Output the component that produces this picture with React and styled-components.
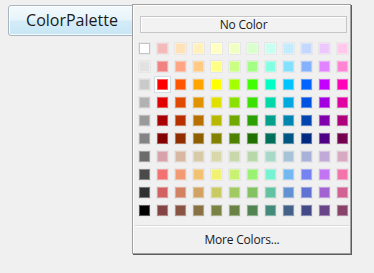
import React from "react";
import styled, { createGlobalStyle } from "styled-components";

const GlobalStyle = createGlobalStyle`
  html, body { margin: 0; padding: 0; background: #f0f0f0; }
  body { font-family: "Open Sans", "Noto Sans", "DejaVu Sans", sans-serif; color: #1e1e1e; }
`;

const PALETTE = [
  ["#ffffff", "#f4baba", "#ffe2b8", "#fff0bc", "#ffffc4", "#f0ffc4", "#d8ffcc", "#c8fff0", "#c4ecff", "#c4d8ff", "#ecc8ff", "#ffc8ec"],
  ["#e2e2e2", "#f08282", "#ffa484", "#ffca84", "#ffff84", "#caff84", "#a2ff84", "#84ffe2", "#84e0ff", "#84b2ff", "#e284ff", "#ff84d4"],
  ["#cacaca", "#ff0000", "#ff5400", "#ffa400", "#ffff00", "#a4ff00", "#40ff00", "#00ffc4", "#00c4ff", "#0064ff", "#c400ff", "#ff00b8"],
  ["#b2b2b2", "#e00000", "#e04a00", "#e09200", "#e0e000", "#8ae000", "#3ce000", "#00d8aa", "#00a8e0", "#0052e0", "#a200e0", "#e000a2"],
  ["#9a9a9a", "#a80000", "#b83000", "#b87000", "#b8b800", "#70aa00", "#2ca000", "#00a08a", "#0084b0", "#0044b0", "#8000ae", "#ae007a"],
  ["#848484", "#820000", "#902e00", "#8e5e00", "#828200", "#4e8000", "#207000", "#00705a", "#005682", "#002a82", "#500082", "#72004e"],
  ["#6c6c6c", "#d8a2aa", "#d8b8a2", "#d8caa8", "#d8d8aa", "#c8d8aa", "#b8d8aa", "#a8d8c8", "#a8c2d8", "#a8b2d8", "#c2aad8", "#d8aac2"],
  ["#4a4a4a", "#f27272", "#f29a72", "#f2c272", "#f2f272", "#caf272", "#9af272", "#74f2d2", "#74b8f2", "#7482f2", "#c274f2", "#f274aa"],
  ["#303030", "#d26262", "#d28262", "#d2a262", "#caca62", "#a2ca62", "#82c262", "#62c2a2", "#6292d2", "#6272d2", "#a262d2", "#d26292"],
  ["#000000", "#844444", "#8a5444", "#887244", "#7a8244", "#6a8244", "#528452", "#448a7a", "#446288", "#444a88", "#6a4488", "#884468"],
];

const Page = styled.div`
  position: relative;
  width: 374px;
  height: 273px;
  padding: 5px 0 0 8px;
  box-sizing: border-box;
`;

const TriggerButton = styled.button`
  width: 128px;
  height: 31px;
  box-sizing: border-box;
  border: 1px solid #a9b6c0;
  border-radius: 3px;
  background: linear-gradient(to bottom, #f4fafd 0%, #e6f4fb 48%, #d4ecf8 52%, #c8e6f6 100%);
  box-shadow: inset 0 0 0 1px rgba(255, 255, 255, 0.8);
  font-family: "Open Sans", "Noto Sans", sans-serif;
  font-size: 16px;
  color: #1a1a1a;
  padding: 0 0 1px 0;
  text-align: center;
`;

const Popup = styled.div`
  position: absolute;
  left: 132px;
  top: 4px;
  width: 219px;
  height: 250px;
  box-sizing: border-box;
  background: #f0f0f0;
  border: 1px solid #a0a0a0;
  box-shadow: inset 1px 1px 0 #ffffff, 1px 1px 0 #5c5c5c;
  display: flex;
  flex-direction: column;
  padding: 11px 3px 0 0;
`;

const NoColorButton = styled.div`
  margin-left: 7px;
  height: 17px;
  box-sizing: border-box;
  border: 1px solid #c6c6c6;
  background: #f2f2f2;
  box-shadow: inset 1px 1px 0 #ffffff;
  display: flex;
  align-items: center;
  justify-content: center;
  font-size: 12px;
  line-height: 14px;
  color: #1a1a1a;
  letter-spacing: -0.2px;
`;

const Grid = styled.div`
  margin: 10px 0 0 6px;
  display: grid;
  grid-template-columns: repeat(12, 11px);
  grid-auto-rows: 11px;
  column-gap: 7px;
  row-gap: 7px;
`;

const Swatch = styled.div`
  width: 11px;
  height: 11px;
  box-sizing: border-box;
  background: ${(p) => p.$color};
  border: 1px solid ${(p) => (p.$light ? "#c4c4c4" : "rgba(255,255,255,0.35)")};
  box-shadow: ${(p) =>
    p.$selected ? "0 0 0 2px #ffffff, 0 0 0 3px #d3dde6" : "0 0 0 1px rgba(225,225,225,0.6)"};
`;

const Separator = styled.div`
  margin: 9px -2px 0 2px;
  height: 0;
  border-top: 1px solid #d9d9d9;
  border-bottom: 1px solid #ffffff;
`;

const MoreColors = styled.div`
  flex: 1;
  display: flex;
  align-items: center;
  justify-content: center;
  font-size: 12px;
  color: #1a1a1a;
  padding: 0 0 2px 4px;
  letter-spacing: -0.2px;
`;

export default function App() {
  return (
    <>
      <GlobalStyle />
      <Page>
        <TriggerButton>ColorPalette</TriggerButton>
        <Popup>
          <NoColorButton>No Color</NoColorButton>
          <Grid>
            {PALETTE.map((row, r) =>
              row.map((c, i) => (
                <Swatch
                  key={`${r}-${i}`}
                  $color={c}
                  $light={r === 0 && i === 0}
                  $selected={r === 2 && i === 1}
                />
              ))
            )}
          </Grid>
          <Separator />
          <MoreColors>More Colors...</MoreColors>
        </Popup>
      </Page>
    </>
  );
}
